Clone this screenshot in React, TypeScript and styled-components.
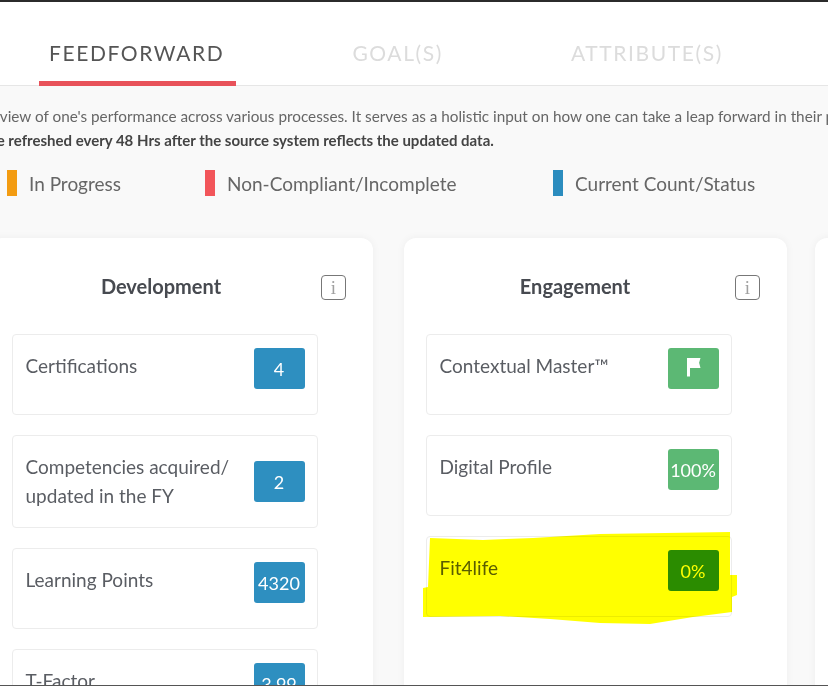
import React from 'react';
import styled, { createGlobalStyle } from 'styled-components';

const GlobalStyle = createGlobalStyle`
  html, body {
    margin: 0;
    padding: 0;
    background: #f9f9f9;
  }
  * {
    box-sizing: border-box;
  }
`;

const legend = [
  { label: 'In Progress', color: '#f39c12', width: 198 },
  { label: 'Non-Compliant/Incomplete', color: '#f2555a', width: 348 },
  { label: 'Current Count/Status', color: '#2b8cbe', width: 220 },
];

const development = [
  { label: 'Certifications', value: '4' },
  { label: 'Competencies acquired/ updated in the FY', value: '2' },
  { label: 'Learning Points', value: '4320' },
  { label: 'T-Factor', value: '3.99' },
];

const FlagIcon = () => (
  <FlagSvg viewBox="0 0 15 20" aria-hidden="true">
    <path d="M1 1h3v18.5H1z" fill="#fff" />
    <path d="M3 1h11.5l-1.4 4.8 1.4 5.2H3z" fill="#fff" />
  </FlagSvg>
);

const Highlight = () => (
  <HighlightSvg viewBox="0 0 320 96" aria-hidden="true">
    <polygon
      fill="#ffff00"
      points="10,8 63,10 113,8 180,4 310,2 310,45 317,45 317,65 312,67 312,82 273,87 230,94 180,93 130,89 80,86 3,87 3,58 8,57"
    />
  </HighlightSvg>
);

export default function App() {
  return (
    <Page>
      <GlobalStyle />
      <Tabs>
        <Tab $active>FEEDFORWARD</Tab>
        <Tab>GOAL(S)</Tab>
        <Tab>ATTRIBUTE(S)</Tab>
      </Tabs>

      <Intro>
        <IntroLine>
          overview of one's performance across various processes. It serves as a holistic input on how one can take a leap forward in their professional journey.
        </IntroLine>
        <IntroNote>Data will be refreshed every 48 Hrs after the source system reflects the updated data.</IntroNote>
      </Intro>

      <Legend>
        {legend.map((item) => (
          <LegendItem key={item.label} $width={item.width}>
            <Swatch $color={item.color} />
            {item.label}
          </LegendItem>
        ))}
      </Legend>

      <Cards>
        <Card>
          <CardHeader>
            <CardTitle>Development</CardTitle>
            <InfoButton>i</InfoButton>
          </CardHeader>
          {development.map((row) => (
            <Row key={row.label}>
              <RowBody>
                <RowLabel>{row.label}</RowLabel>
                <Badge $color="#2e8fc0">{row.value}</Badge>
              </RowBody>
            </Row>
          ))}
        </Card>

        <Card>
          <CardHeader>
            <CardTitle>Engagement</CardTitle>
            <InfoButton>i</InfoButton>
          </CardHeader>
          <Row>
            <RowBody>
              <RowLabel>Contextual Master™</RowLabel>
              <Badge $color="#5cb874">
                <FlagIcon />
              </Badge>
            </RowBody>
          </Row>
          <Row>
            <RowBody>
              <RowLabel>Digital Profile</RowLabel>
              <Badge $color="#5cb874">100%</Badge>
            </RowBody>
          </Row>
          <Row>
            <RowBody>
              <RowLabel>Fit4life</RowLabel>
              <Badge $color="#2b8c44">0%</Badge>
            </RowBody>
            <Highlight />
          </Row>
        </Card>

        <Card />
      </Cards>
    </Page>
  );
}

const Page = styled.div`
  width: 828px;
  height: 686px;
  overflow: hidden;
  background: #f9f9f9;
  border-top: 2px solid #2b2b2b;
  border-bottom: 1px solid #555;
  font-family: Lato, 'Open Sans', sans-serif;
  filter: blur(0.35px);
`;

const Tabs = styled.div`
  display: flex;
  gap: 106px;
  height: 84px;
  padding-left: 39px;
  background: #fff;
  border-bottom: 1px solid #e6e6e6;
`;

const Tab = styled.div<{ $active?: boolean }>`
  height: 84px;
  padding: 38px 12px 0 10px;
  margin-bottom: -1px;
  font-size: 21px;
  line-height: 26px;
  letter-spacing: 1.6px;
  white-space: nowrap;
  color: ${(p) => (p.$active ? '#555' : '#dcdcdc')};
  border-bottom: 5px solid ${(p) => (p.$active ? '#e8525a' : 'transparent')};
`;

const Intro = styled.div`
  padding-top: 18px;
  font-size: 15px;
  line-height: 24px;
  white-space: nowrap;
`;

const IntroLine = styled.div`
  margin-left: -30px;
  font-size: 15.3px;
  color: #666;
`;

const IntroNote = styled.div`
  margin-left: -74px;
  color: #444;
  font-weight: 700;
`;

const Legend = styled.div`
  display: flex;
  margin-top: 18px;
  padding-left: 7px;
`;

const LegendItem = styled.div<{ $width: number }>`
  display: flex;
  align-items: center;
  gap: 12px;
  width: ${(p) => p.$width}px;
  height: 26px;
  font-size: 19px;
  color: #666;
  white-space: nowrap;
`;

const Swatch = styled.span<{ $color: string }>`
  width: 10px;
  height: 26px;
  background: ${(p) => p.$color};
`;

const Cards = styled.div`
  display: flex;
  gap: 28px;
  margin: 42px 0 0 -10px;
  width: 1300px;
`;

const Card = styled.section`
  flex: none;
  width: 383px;
  height: 700px;
  padding: 36px 0 0 22px;
  background: #fff;
  border-radius: 12px;
  box-shadow: 0 0 8px rgba(0, 0, 0, 0.05);

  &:first-child {
    margin-right: 3px;
  }
`;

const CardHeader = styled.header`
  display: flex;
  align-items: center;
  width: 320px;
  margin: 0 0 33px -11px;
`;

const CardTitle = styled.h2`
  flex: 1;
  margin: 0;
  padding-bottom: 2px;
  text-align: center;
  font-size: 20px;
  line-height: 25px;
  font-weight: 700;
  color: #474a50;
`;

const InfoButton = styled.span`
  flex: none;
  width: 25px;
  height: 25px;
  margin-right: -25px;
  display: flex;
  align-items: center;
  justify-content: center;
  border: 1px solid #777;
  border-radius: 4px;
  font-family: 'Liberation Serif', serif;
  font-size: 19px;
  color: #a0a0a0;
`;

const Row = styled.div`
  position: relative;
  width: 306px;
  min-height: 81px;
  padding: 13px 12.5px 12.5px;
  margin-bottom: 20px;
  background: #fff;
  border: 1px solid #ececec;
  border-radius: 4px;
`;

const RowBody = styled.div`
  display: flex;
  align-items: flex-start;
  justify-content: space-between;
`;

const RowLabel = styled.div`
  width: 210px;
  padding: 2.5px 0 5px;
  font-size: 19px;
  line-height: 29px;
  color: #5a5d63;
`;

const Badge = styled.div<{ $color: string }>`
  flex: none;
  align-self: center;
  width: 51px;
  height: 41px;
  display: flex;
  align-items: center;
  justify-content: center;
  background: ${(p) => p.$color};
  border-radius: 3px;
  font-size: 18px;
  color: #fff;
`;

const FlagSvg = styled.svg`
  width: 15px;
  height: 20px;
  margin-bottom: 4px;
`;

const HighlightSvg = styled.svg`
  position: absolute;
  left: -7px;
  top: -7px;
  width: 320px;
  height: 96px;
  mix-blend-mode: multiply;
  pointer-events: none;
`;
